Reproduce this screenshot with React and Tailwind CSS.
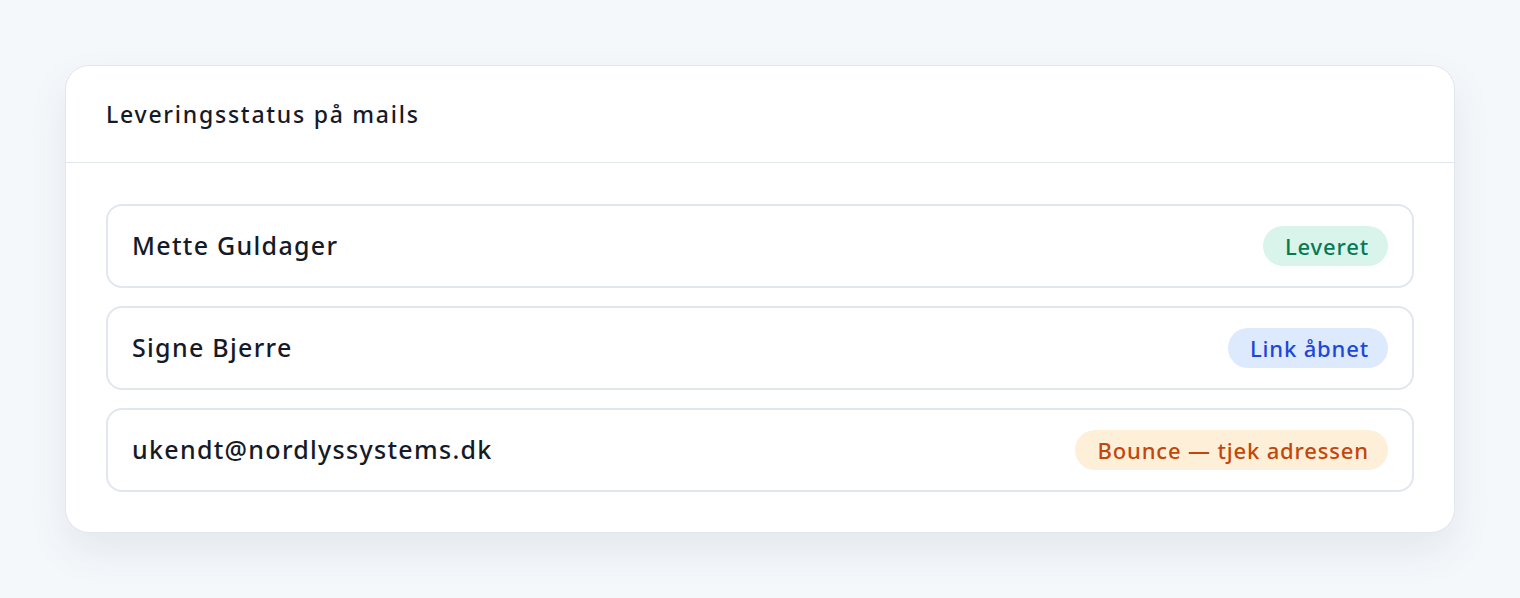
import React from "react";

const rows = [
  { name: "Mette Guldager", status: "Leveret", tone: "green" },
  { name: "Signe Bjerre", status: "Link åbnet", tone: "blue" },
  { name: "ukendt@nordlyssystems.dk", status: "Bounce — tjek adressen", tone: "orange" },
];

const badgeTone = {
  green: "bg-[#d9f4ea] text-[#067a55]",
  blue: "bg-[#dde9fd] text-[#1d47d8]",
  orange: "bg-[#feefd9] text-[#c2470a]",
};

const App = () => {
  return (
    <div
      className="min-h-[598px] w-full bg-[#f5f8fb] pt-[65px] px-[65px] font-['Noto_Sans',_sans-serif] text-[#151a28]"
    >
      <div className="bg-white border border-[#e1e6ef] rounded-[24px] shadow-[0_18px_40px_rgba(30,45,80,0.08)]">
        {/* header */}
        <div className="px-10 h-[97px] flex items-center border-b border-[#e1e6ef]">
          <h2 className="text-[23px] font-medium tracking-[1.75px]">Leveringsstatus på mails</h2>
        </div>

        {/* rows */}
        <div className="px-10 pt-[41px] pb-10 flex flex-col gap-[18px]">
          {rows.map((row) => (
            <div
              key={row.name}
              className="h-[84px] flex items-center justify-between px-6 border-2 border-[#e1e6ef] rounded-[16px]"
            >
              <span className="text-[25px] font-medium tracking-[1.3px]">{row.name}</span>
              <span
                className={`h-10 flex items-center pl-[22px] pr-[19px] rounded-full text-[22px] font-medium tracking-[0.85px] ${badgeTone[row.tone]}`}
              >
                {row.status}
              </span>
            </div>
          ))}
        </div>
      </div>
    </div>
  );
};

export default App;
